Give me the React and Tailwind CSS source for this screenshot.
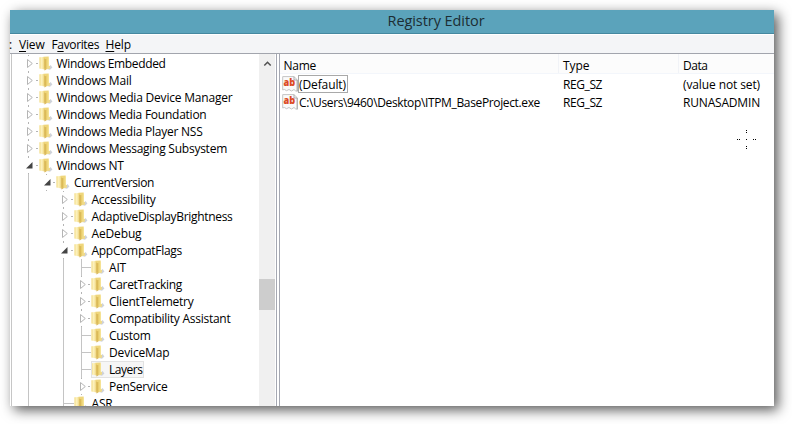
import { useLayoutEffect, useRef } from "react";

// Spreads the letters of a label so that it takes exactly the given width.
function Label({ w, children, className = "" }) {
  const ref = useRef(null);
  useLayoutEffect(() => {
    const el = ref.current;
    el.style.letterSpacing = "0px";
    const natural = el.getBoundingClientRect().width;
    el.style.letterSpacing = `${(w - natural) / el.textContent.length}px`;
  }, [w]);
  return (
    <span ref={ref} className={`whitespace-pre shrink-0 ${className}`}>
      {children}
    </span>
  );
}

// name, depth, state (c = collapsed, o = open, l = leaf), label width
const rows = [
  ["Windows Embedded", 0, "c", 109],
  ["Windows Mail", 0, "c", 75],
  ["Windows Media Device Manager", 0, "c", 176],
  ["Windows Media Foundation", 0, "c", 150],
  ["Windows Media Player NSS", 0, "c", 146],
  ["Windows Messaging Subsystem", 0, "c", 170.5],
  ["Windows NT", 0, "o", 67],
  ["CurrentVersion", 1, "o", 80],
  ["Accessibility", 2, "c", 64],
  ["AdaptiveDisplayBrightness", 2, "c", 141],
  ["AeDebug", 2, "c", 50],
  ["AppCompatFlags", 2, "o", 90.5],
  ["AIT", 3, "l", 17],
  ["CaretTracking", 3, "c", 73],
  ["ClientTelemetry", 3, "c", 84.5],
  ["Compatibility Assistant", 3, "c", 121.5],
  ["Custom", 3, "l", 41.5],
  ["DeviceMap", 3, "l", 60.5],
  ["Layers", 3, "l", 33.5],
  ["PenService", 3, "c", 58.5],
  ["ASR", 2, "l", 21],
];

const lineX = [17.5, 35.5, 52.5, 70.5];
const folderX = [27, 44, 62, 79];

function Guides({ depth, state, index }) {
  const x = lineX[depth];
  const end = folderX[depth];
  return (
    <svg width={end} height="17" className="shrink-0" fill="none" stroke="#c4c4c4" shapeRendering="crispEdges">
      {index > 6 && <path d="M16.5 0V17" />}
      {depth === 3 && <path d="M51.5 0V17" />}
      {state === "l" && <path d={`M${x - 1} 0V17M${x - 1} 8.5H${end}`} />}
      {state !== "l" && (
        <path d={`M${x - 1} 0V1M${x - 1} 16V17M${end - 3} 8.5H${end - 1}`} stroke="#b4b4b4" />
      )}
      {state === "c" && (
        <path
          d={`M${x - 2} 4.5V12.5L${x + 2.8} 8.5Z`}
          fill="#fff"
          stroke="#b5b5b5"
          shapeRendering="auto"
        />
      )}
      {state === "o" && (
        <path d={`M${x + 3} 5V11.5H${x - 3.5}Z`} fill="#444" stroke="none" shapeRendering="auto" />
      )}
    </svg>
  );
}

function Folder() {
  return (
    <svg width="14" height="17" viewBox="0 0 14 17" className="shrink-0">
      <defs>
        <linearGradient id="front" x1="0" x2="1">
          <stop offset="0" stopColor="#f3dc86" />
          <stop offset=".45" stopColor="#fdf3c2" />
          <stop offset="1" stopColor="#ecd070" />
        </linearGradient>
        <linearGradient id="right" x1="0" x2="1">
          <stop offset="0" stopColor="#e3c35c" />
          <stop offset="1" stopColor="#f7e595" />
        </linearGradient>
      </defs>
      <path d="M8 14L11.6 10L13.4 12.6L11 14.8Z" fill="#c6cad2" opacity=".85" />
      <path d="M4.4 1.8L9.7 1.4V13.4H4.4Z" fill="#efd67c" />
      <path d="M.4 2.2L4.8 1.9L5.6 3.4V14.4L.4 13.4Z" fill="url(#front)" />
      <path d="M5.5 3.6L6.8 4.6V14.8L5.5 15.4Z" fill="#cfab4c" />
      <path d="M6.6 4.4L9.8 2.6V12.8L6.6 15Z" fill="url(#right)" />
      <path d="M8.4 11.4L11 10.8V13.4L8.4 14.2Z" fill="#efda8c" />
    </svg>
  );
}

function StringIcon() {
  return (
    <svg width="16" height="16" viewBox="0 0 16 16" className="shrink-0">
      <path
        d="M.7 .6H12L15.3 3.8V15.3L13.5 14.8L12 13.5L9.5 15L7 13.5L4.5 14.7L2.3 13.4L.7 14Z"
        fill="#fafafa"
        stroke="#c4c4c4"
      />
      <path d="M12 .8V4H15.2V15.2" fill="none" stroke="#a4a4a4" strokeWidth=".9" />
      <text
        x="1.6"
        y="9.6"
        fontFamily="Open Sans, sans-serif"
        fontWeight="800"
        fontSize="10.2"
        textLength="11.6"
        lengthAdjust="spacingAndGlyphs"
        fill="#dc4a24"
      >
        ab
      </text>
    </svg>
  );
}

function TreeRow({ row, index }) {
  const [name, depth, state, w] = row;
  const selected = name === "Layers";
  return (
    <div className="flex h-[17px] shrink-0 items-center">
      <Guides depth={depth} state={state} index={index} />
      <div className={`flex h-[17px] items-center ${selected ? "bg-[#f6f6f6] outline-1 -outline-offset-1 outline-[#e2e2e2]" : ""}`}>
        <Folder />
        <Label w={w} className={`leading-[17px] ${depth % 2 ? "ml-[4px]" : "ml-[3.5px]"}`}>
          {name}
        </Label>
        {selected && <span className="w-[1.5px]" />}
      </div>
    </div>
  );
}

function ValueRow({ name, nameW, type, data, dataW, focused }) {
  return (
    <div className="flex h-[18px] items-center">
      <div className="flex w-[283px] items-center pl-[2px]">
        <StringIcon />
        <div className={`flex h-[18px] items-center pt-[1px] pl-[1px] ${focused ? "pr-[2px] outline-1 -outline-offset-1 outline-[#a9a9a9]" : ""}`}>
          <Label w={nameW}>{name}</Label>
        </div>
      </div>
      <div className="flex w-[120px] pt-[1px]">
        <Label w={39}>{type}</Label>
      </div>
      <Label w={dataW} className="pt-[1px]">{data}</Label>
    </div>
  );
}

export default function App() {
  return (
    <div className="h-[424px] w-[792px] overflow-hidden bg-white pt-[10px] pl-[10px] font-['Open_Sans','Noto_Sans',sans-serif] text-[12px] text-black">
      <div className="flex h-[396px] w-[764px] flex-col bg-white shadow-[4px_4px_12px_0px_rgba(0,0,0,0.66)]">
        <header className="flex h-[24px] shrink-0 items-center border-b border-[#4588a0] bg-[#5ba3bb] pl-[377.5px] text-[14.5px] leading-[20px] text-[#1c2d33]">
          <Label w={97} className="-mt-[2px]">Registry Editor</Label>
        </header>
        <nav className="flex h-[20px] shrink-0 items-center border-t border-b border-t-white border-b-[#a2a5ad] bg-[#f4f5f7] pt-[1px] leading-[17px]">
          <span className="w-[9px] shrink-0 indent-[-1px]">:</span>
          <Label w={25.5} className="mr-[7px]"><u className="underline-offset-2">V</u>iew</Label>
          <Label w={47.5} className="mr-[6.5px]">F<u className="underline-offset-2">a</u>vorites</Label>
          <Label w={25.5}><u className="underline-offset-2">H</u>elp</Label>
        </nav>
        <main className="flex min-h-0 flex-1">
          <section className="ml-[1px] flex w-[266px] shrink-0 border-r border-l border-r-[#a5a8b2] border-l-[#c6c6c6]">
            <div className="flex min-w-0 flex-1 flex-col overflow-hidden pt-[1px]">
              {rows.map((row, i) => (
                <TreeRow key={row[0]} row={row} index={i} />
              ))}
            </div>
            <div className="mr-[1px] flex w-[16px] flex-col bg-[#f0f0f0]">
              <svg width="16" height="17" className="mt-[1px]">
                <path d="M5.3 10.5L8.5 7.3L11.7 10.5" fill="none" stroke="#505050" strokeWidth="1.5" />
              </svg>
              <div className="mt-[207px] h-[31px] bg-[#cdcdcd]" />
            </div>
          </section>
          <section className="ml-[2px] flex-1 border-l border-[#a5a8b2]">
            <div className="flex h-[20px] items-center border-b border-[#f3f6fb] bg-[#fcfcfc]">
              <div className="flex h-full w-[279px] items-center border-r border-[#f1f3f7] pt-[4px] pl-[3.5px]">
                <Label w={32.5}>Name</Label>
              </div>
              <div className="flex h-full w-[120px] items-center border-r border-[#f1f3f7] pt-[4px] pl-[4px]">
                <Label w={26.5}>Type</Label>
              </div>
              <div className="pt-[4px] pl-[4px]">
                <Label w={24.5}>Data</Label>
              </div>
            </div>
            <div className="flex flex-col pt-[1px]">
              <ValueRow name="(Default)" nameW={47} type="REG_SZ" data="(value not set)" dataW={77} focused />
              <ValueRow name={"C:\\Users\\9460\\Desktop\\ITPM_BaseProject.exe"} nameW={241} type="REG_SZ" data="RUNASADMIN" dataW={77} />
            </div>
            <svg width="20" height="20" className="mt-[18px] ml-[457px]" fill="#000" shapeRendering="crispEdges">
              <path d="M9 1h1v1h-1zM9 3h1v1h-1zM0 10h1v1h-1zM2 10h1v1h-1zM9 10h1v1h-1zM16 10h1v1h-1zM18 10h1v1h-1zM9 17h1v1h-1zM9 19h1v1h-1z" />
            </svg>
          </section>
        </main>
      </div>
    </div>
  );
}
